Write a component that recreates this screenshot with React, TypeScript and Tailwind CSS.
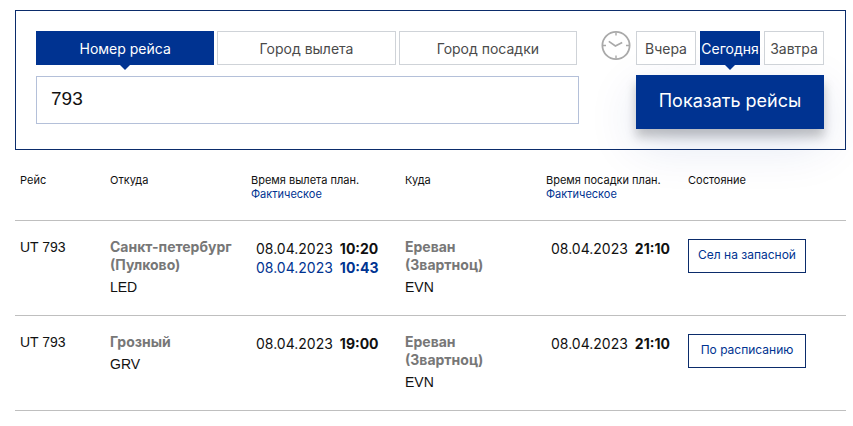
import { useState } from "react";
import clsx from "clsx";

type Moment = { date: string; time: string };

type Flight = {
  id: number;
  number: string;
  from: { city: string; code: string };
  to: { city: string; code: string };
  departure: Moment;
  departureActual?: Moment;
  arrival: Moment;
  status: string;
};

const modes = ["Номер рейса", "Город вылета", "Город посадки"];
const days = ["Вчера", "Сегодня", "Завтра"];

const flights: Flight[] = [
  {
    id: 1,
    number: "UT 793",
    from: { city: "Санкт-петербург (Пулково)", code: "LED" },
    to: { city: "Ереван (Звартноц)", code: "EVN" },
    departure: { date: "08.04.2023", time: "10:20" },
    departureActual: { date: "08.04.2023", time: "10:43" },
    arrival: { date: "08.04.2023", time: "21:10" },
    status: "Сел на запасной",
  },
  {
    id: 2,
    number: "UT 793",
    from: { city: "Грозный", code: "GRV" },
    to: { city: "Ереван (Звартноц)", code: "EVN" },
    departure: { date: "08.04.2023", time: "19:00" },
    arrival: { date: "08.04.2023", time: "21:10" },
    status: "По расписанию",
  },
];

function ClockIcon() {
  return (
    <svg className="w-[30px] h-[30px] shrink-0" viewBox="0 0 30 30" fill="none" stroke="#a9a9a9" aria-hidden="true">
      <circle cx="15" cy="14.5" r="13.6" strokeWidth="1.8" />
      <path d="M15 1.5v3M15 24.5v3M2 14.5h3M25 14.5h3" strokeWidth="1.4" />
      <path d="M7.8 10.4 14.4 14.9 21.2 11.4" strokeWidth="1.7" />
    </svg>
  );
}

function Tab({ label, active, onClick }: { label: string; active: boolean; onClick: () => void }) {
  return (
    <button
      type="button"
      aria-pressed={active}
      onClick={onClick}
      className={clsx(
        "relative flex-1 min-w-0 h-[34px] flex items-center justify-center border text-[14px] whitespace-nowrap",
        active ? "bg-[#003391] border-[#003391] text-white" : "bg-white border-[#cfd3d8] text-[#4a4a4a]"
      )}
    >
      {label}
      {active && (
        <svg className="absolute top-full left-1/2 -translate-x-1/2 w-3 h-[6px]" viewBox="0 0 12 6" aria-hidden="true">
          <path d="M0 0h12L6 6z" fill="#003391" />
        </svg>
      )}
    </button>
  );
}

function Place({ city, code }: { city: string; code: string }) {
  return (
    <>
      <p className="max-w-[130px] font-bold text-[#777]">{city}</p>
      <p className="mt-1 font-['Liberation_Sans',sans-serif]">{code}</p>
    </>
  );
}

function DateTime({ value, actual }: { value: Moment; actual?: boolean }) {
  return (
    <p className={clsx("flex gap-[7px] pl-[5px] leading-[19px] whitespace-nowrap", actual && "text-[#003391]")}>
      <span>{value.date}</span>
      <b>{value.time}</b>
    </p>
  );
}

export default function App() {
  const [mode, setMode] = useState(0);
  const [day, setDay] = useState(1);
  const [query, setQuery] = useState("793");

  return (
    <main className="min-h-screen bg-white pt-[10px] pl-[15px] pr-[7px] pb-4 font-['Inter','Liberation_Sans',sans-serif] text-[#111]">
      {/* Search form */}
      <form
        onSubmit={(e) => e.preventDefault()}
        className="flex border border-[#0b2c6b] py-5 pl-5 pr-[21px]"
      >
        <div className="flex-1 flex flex-col gap-[11px]">
          <div className="flex gap-[3px] pr-[2px]">
            {modes.map((label, i) => (
              <Tab key={label} label={label} active={i === mode} onClick={() => setMode(i)} />
            ))}
          </div>
          <input
            type="text"
            aria-label={modes[mode]}
            value={query}
            onChange={(e) => setQuery(e.target.value)}
            className="w-full h-12 border border-[#b4c0d9] px-[14px] pb-[2px] font-['Liberation_Sans',sans-serif] text-[19px] outline-none"
          />
        </div>

        <div className="flex ml-[22px] gap-[5px]">
          <ClockIcon />
          <div className="w-[188px] flex flex-col gap-[10px]">
            <div className="flex gap-1">
              {days.map((label, i) => (
                <Tab key={label} label={label} active={i === day} onClick={() => setDay(i)} />
              ))}
            </div>
            <button
              type="submit"
              className="h-[54px] pb-1 bg-[#003391] text-white text-[18px] shadow-[0_8px_10px_rgba(0,0,0,0.22),0_16px_50px_rgba(0,51,145,0.12)]"
            >
              Показать рейсы
            </button>
          </div>
        </div>
      </form>

      {/* Results */}
      <table className="w-full table-fixed border-collapse text-left">
        <colgroup>
          <col className="w-[90px]" />
          <col className="w-[141px]" />
          <col className="w-[154px]" />
          <col className="w-[141px]" />
          <col className="w-[142px]" />
          <col />
        </colgroup>
        <thead className="text-[11px] leading-[14px]">
          <tr className="h-[70px] border-b border-[#bfbfbf] align-top *:pt-[23px] *:pl-[5px] *:font-normal">
            <th>Рейс</th>
            <th>Откуда</th>
            <th className="whitespace-nowrap">
              Время вылета план.
              <span className="block text-[#003391]">Фактическое</span>
            </th>
            <th>Куда</th>
            <th className="whitespace-nowrap">
              Время посадки план.
              <span className="block text-[#003391]">Фактическое</span>
            </th>
            <th>Состояние</th>
          </tr>
        </thead>
        <tbody className="text-[14px] leading-[18px]">
          {flights.map((flight) => (
            <tr key={flight.id} className="h-[95px] border-b border-[#bfbfbf] align-top *:pl-[5px]">
              <td className="pt-[17px] font-['Liberation_Sans',sans-serif]">{flight.number}</td>
              <td className="pt-[17px]">
                <Place {...flight.from} />
              </td>
              <td className="pt-[18px]">
                <DateTime value={flight.departure} />
                {flight.departureActual && <DateTime value={flight.departureActual} actual />}
              </td>
              <td className="pt-[17px]">
                <div className="w-[90px]">
                  <Place {...flight.to} />
                </div>
              </td>
              <td className="pt-[18px]">
                <DateTime value={flight.arrival} />
              </td>
              <td className="pt-[18px]">
                <span className="w-[118px] h-[34px] pb-[2px] flex items-center justify-center border border-[#0b2c6b] text-[12px] text-[#003391] whitespace-nowrap">
                  {flight.status}
                </span>
              </td>
            </tr>
          ))}
        </tbody>
      </table>
    </main>
  );
}
